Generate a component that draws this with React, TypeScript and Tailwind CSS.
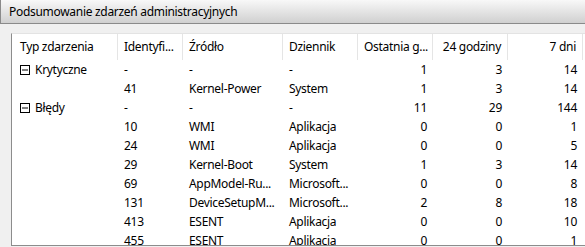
import React from "react";

type Row = {
  group?: string;
  id: string;
  source: string;
  log: string;
  hour: string;
  day: string;
  week: string;
};

const ROWS: Row[] = [
  { group: "Krytyczne", id: "-", source: "-", log: "-", hour: "1", day: "3", week: "14" },
  { id: "41", source: "Kernel-Power", log: "System", hour: "1", day: "3", week: "14" },
  { group: "Błędy", id: "-", source: "-", log: "-", hour: "11", day: "29", week: "144" },
  { id: "10", source: "WMI", log: "Aplikacja", hour: "0", day: "0", week: "1" },
  { id: "24", source: "WMI", log: "Aplikacja", hour: "0", day: "0", week: "5" },
  { id: "29", source: "Kernel-Boot", log: "System", hour: "1", day: "3", week: "14" },
  { id: "69", source: "AppModel-Ru...", log: "Microsoft...", hour: "0", day: "0", week: "8" },
  { id: "131", source: "DeviceSetupM...", log: "Microsoft...", hour: "2", day: "8", week: "18" },
  { id: "413", source: "ESENT", log: "Aplikacja", hour: "0", day: "0", week: "10" },
  { id: "455", source: "ESENT", log: "Aplikacja", hour: "0", day: "0", week: "1" },
];

const COLS = "grid grid-cols-[106px_65px_100px_75px_75px_75px_75px]";

function Expander() {
  return (
    <svg width="10" height="10" viewBox="0 0 10 10" className="shrink-0">
      <rect x="0.5" y="0.5" width="9" height="9" fill="white" stroke="black" />
      <line x1="2" y1="5" x2="8" y2="5" stroke="black" />
    </svg>
  );
}

function HeaderCell({ label, right }: { label: string; right?: boolean }) {
  return (
    <div
      className={`flex items-center whitespace-nowrap border-r border-[#e5e5e5] px-[6px] ${right ? "justify-end" : ""}`}
    >
      {label}
    </div>
  );
}

export default function App() {
  return (
    <div className="h-[247px] w-[585px] overflow-hidden bg-[#f0f0f0] font-['Noto_Sans',sans-serif] text-[12px] leading-none tracking-[-0.3px] text-black">
      {/* Title bar */}
      <div className="flex h-[24px] items-center border-b border-l border-[#8a8a8a] bg-gradient-to-b from-[#f8f8f8] to-[#d0d0d0] pl-[8px]">
        Podsumowanie zdarzeń administracyjnych
      </div>

      {/* List view */}
      <div className="ml-[11px] mt-[9px] h-[213px] w-[600px] overflow-hidden border-b border-l border-t border-b-[#8c8c8c] border-l-[#8c8c8c] border-t-[#e3e3e3] bg-white">
        <div className={`${COLS} h-[26px]`}>
          <div className="flex items-center whitespace-nowrap border-r border-[#e5e5e5] pl-[8px]">
            Typ zdarzenia
          </div>
          <HeaderCell label="Identyfi..." />
          <HeaderCell label="Źródło" />
          <HeaderCell label="Dziennik" />
          <HeaderCell label="Ostatnia g..." />
          <HeaderCell label="24 godziny" right />
          <HeaderCell label="7 dni" right />
        </div>

        {ROWS.map((r, i) => (
          <div key={i} className={`${COLS} h-[19px] items-center whitespace-nowrap`}>
            <div className="flex items-center gap-[5px] pl-[8px]">
              {r.group && (
                <>
                  <Expander />
                  <span>{r.group}</span>
                </>
              )}
            </div>
            <div className="px-[6px]">{r.id}</div>
            <div className="px-[6px]">{r.source}</div>
            <div className="px-[6px]">{r.log}</div>
            <div className="px-[6px] text-right">{r.hour}</div>
            <div className="px-[6px] text-right">{r.day}</div>
            <div className="px-[6px] text-right">{r.week}</div>
          </div>
        ))}
      </div>
    </div>
  );
}
